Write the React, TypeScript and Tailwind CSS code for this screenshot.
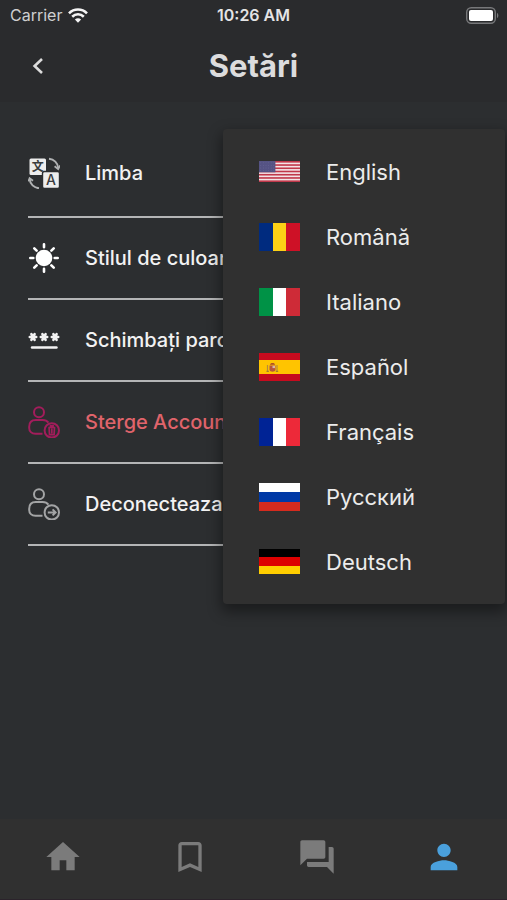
import type { ReactNode } from "react";
import { MdBookmarkBorder, MdHome, MdPerson, MdQuestionAnswer } from "react-icons/md";

/* ── Settings icons ───────────────────────────── */

function TranslateIcon() {
  return (
    <svg viewBox="0 0 32 32" className="size-8" fill="none">
      <path d="M21 1.800c5 .4 8.800 4 9.200 9.200" stroke="#b0b2b3" strokeWidth="2" />
      <path d="M26.600 9.300l3.600 2.800 2-3.800" stroke="#b0b2b3" strokeWidth="1.800" />
      <path d="M11 31.200c-5-.4-9-4-9.300-9.200" stroke="#b0b2b3" strokeWidth="2" />
      <path d="M5 23.700l-3.400-2.600-1.200 3.400" stroke="#b0b2b3" strokeWidth="1.800" />
      <rect x="1.500" y="1.500" width="16.500" height="16.500" rx="1.500" fill="#ededed" />
      <text x="9.700" y="14.300" textAnchor="middle" fontSize="12" fontWeight="700" fontFamily="'Noto Sans CJK SC', sans-serif" fill="#3a3c3e">
        文
      </text>
      <rect x="14.500" y="14.500" width="17" height="17" rx="2" fill="#ededed" stroke="#2c2e30" strokeWidth="1.400" />
      <text x="23" y="28" textAnchor="middle" fontSize="14" fontWeight="500" fontFamily="Inter, sans-serif" fill="#3a3c3e">
        A
      </text>
    </svg>
  );
}

function SunIcon() {
  return (
    <svg viewBox="0 0 32 32" className="size-8">
      <circle cx="16" cy="16" r="8.300" fill="#fff" />
      <path
        d="M16 2.300v3M16 26.700v3M2.300 16h3M26.700 16h3M6.300 6.300l2.300 2.300M23.400 23.400l2.300 2.300M6.300 25.700l2.300-2.300M23.400 8.600l2.300-2.300"
        stroke="#fff"
        strokeWidth="2.600"
        strokeLinecap="round"
      />
    </svg>
  );
}

function PasswordIcon() {
  return (
    <svg viewBox="0 0 32 32" className="size-8" stroke="#f2f2f2" strokeLinecap="round">
      {[5, 16, 27].map((x) => (
        <path
          key={x}
          d={`M${x - 3.2} 13h6.400M${x - 1.6} 10.200l3.200 5.600M${x + 1.6} 10.200l-3.200 5.600`}
          strokeWidth="2.600"
        />
      ))}
      <path d="M4 23.500h24.500" strokeWidth="2.400" />
    </svg>
  );
}

function AccountIcon({ children }: { children: ReactNode }) {
  return (
    <svg viewBox="0 0 32 32" className="size-8" fill="none" stroke="currentColor" strokeWidth="2">
      <circle cx="11" cy="6.300" r="5" />
      <path d="M14.500 27.700H7.500C3.500 27.700 1.200 25.300 1.200 22v-1.300c0-4.200 2.500-6.700 6.500-6.700h7c2.500 0 4.500 1 5.700 2.600" />
      <circle cx="23.800" cy="24.400" r="7.200" />
      {children}
    </svg>
  );
}

const settings = [
  { label: "Limba", icon: <TranslateIcon />, color: "text-[#f2f2f2]" },
  { label: "Stilul de culoare", icon: <SunIcon />, color: "text-[#f2f2f2]" },
  { label: "Schimbați parola", icon: <PasswordIcon />, color: "text-[#f2f2f2]" },
  {
    label: "Sterge Account",
    icon: (
      <span className="text-[#a21d5b]">
        <AccountIcon>
          <path d="M20.300 21.500h7M22.500 21.300v-1.500h2.600v1.500M21.100 21.500l.4 7.200h4.600l.4-7.200M23.800 22.500v5" strokeWidth="1.700" />
        </AccountIcon>
      </span>
    ),
    color: "text-[#e0646b]",
  },
  {
    label: "Deconecteaza",
    icon: (
      <span className="text-[#a3a4a5]">
        <AccountIcon>
          <path d="M19.800 24.400h7.500M24.600 21.400l3 3-3 3" />
        </AccountIcon>
      </span>
    ),
    color: "text-[#f2f2f2]",
  },
];

/* ── Flags ────────────────────────────────────── */

function Flag({ colors, vertical = false, size = "h-7" }: { colors: string[]; vertical?: boolean; size?: string }) {
  return (
    <svg viewBox="0 0 3 3" preserveAspectRatio="none" shapeRendering="crispEdges" className={`w-[41px] ${size}`}>
      {colors.map((c, i) =>
        vertical ? (
          <rect key={i} x={i} y="0" width="1" height="3" fill={c} />
        ) : (
          <rect key={i} x="0" y={i} width="3" height="1" fill={c} />
        )
      )}
    </svg>
  );
}

function UsaFlag() {
  return (
    <svg viewBox="0 0 41 21" className="h-[21px] w-[41px]">
      <rect width="41" height="21" fill="#f3e4e6" />
      {Array.from({ length: 7 }).map((_, i) => (
        <rect key={i} y={(i * 42) / 13} width="41" height={21 / 13} fill="#c0384a" />
      ))}
      <rect width="16.400" height="11.300" fill="#555384" />
      {Array.from({ length: 4 }).map((_, row) =>
        Array.from({ length: 6 }).map((_, col) => (
          <circle key={`${row}-${col}`} cx={1.8 + col * 2.6} cy={1.8 + row * 2.6} r=".4" fill="#74729c" />
        ))
      )}
    </svg>
  );
}

function SpainFlag() {
  return (
    <svg viewBox="0 0 41 28" className="h-7 w-[41px]">
      <rect width="41" height="28" fill="#c60b1e" />
      <rect y="7" width="41" height="14" fill="#ffc400" />
      <path d="M8.500 12v6M18 12v6" stroke="#b58a3c" strokeWidth="1.200" />
      <path d="M10.500 12.500h6v4c0 3-6 3-6 0z" fill="#b5553c" />
      <path d="M11 11.800c0-2.500 5-2.500 5 0z" fill="#ad4a28" />
      <rect x="13.500" y="12.800" width="2.500" height="2.300" fill="#d9b8a8" />
      <path d="M7.500 18.300h2.400M16.800 18.300h2.400" stroke="#8a6a3a" strokeWidth="1" />
    </svg>
  );
}

const languages = [
  { name: "English", flag: <UsaFlag /> },
  { name: "Română", flag: <Flag vertical colors={["#002b7f", "#fcd116", "#ce1126"]} /> },
  { name: "Italiano", flag: <Flag vertical colors={["#009246", "#ffffff", "#ce2b37"]} /> },
  { name: "Español", flag: <SpainFlag /> },
  { name: "Français", flag: <Flag vertical colors={["#002395", "#ffffff", "#ed2939"]} /> },
  { name: "Русский", flag: <Flag colors={["#ffffff", "#0039a6", "#d52b1e"]} /> },
  { name: "Deutsch", flag: <Flag size="h-[25px]" colors={["#000000", "#dd0000", "#ffce00"]} /> },
];

const tabs = [
  { label: "Acasă", Icon: MdHome, color: "text-[#7b7b7b]" },
  { label: "Salvate", Icon: MdBookmarkBorder, color: "text-[#7b7b7b]" },
  { label: "Mesaje", Icon: MdQuestionAnswer, color: "text-[#7b7b7b]" },
  { label: "Profil", Icon: MdPerson, color: "text-[#4aa0dc]" },
];

function StatusBar() {
  return (
    <div className="grid h-[30px] grid-cols-3 items-center px-2 text-base">
      <div className="flex items-center gap-1.5 pl-0.5 text-[#cfcfd0]">
        <span>Carrier</span>
        <svg viewBox="0 0 20 15" className="h-[15px] w-5" fill="none" stroke="#f5f5f5" strokeWidth="2.600">
          <path d="M1 5.300c5-5 13-5 18 0" />
          <path d="M4.200 8.700c3.300-3.200 8.300-3.200 11.600 0" />
          <path d="M6.900 11.500c1.800-1.700 4.400-1.700 6.200 0L10 14.800z" fill="#f5f5f5" stroke="none" />
        </svg>
      </div>
      <span className="text-center font-semibold text-[#e4e4e5]">10:26 AM</span>
      <svg viewBox="0 0 33 17" className="h-[17px] w-[33px] justify-self-end">
        <rect x=".7" y=".7" width="28.600" height="15.600" rx="4.500" fill="none" stroke="#77787a" strokeWidth="1.400" />
        <rect x="3" y="3" width="24" height="11" rx="2" fill="#fff" />
        <path d="M31 6v5c1.800-.6 1.800-4.400 0-5z" fill="#77787a" />
      </svg>
    </div>
  );
}

export default function App() {
  return (
    <div className="flex min-h-screen flex-col bg-[#2c2e30] font-[Inter,'Noto_Sans',sans-serif]">
      <header className="bg-[#2a2b2d]">
        <StatusBar />
        <div className="grid h-[72px] grid-cols-[80px_1fr_80px] items-center">
          <button aria-label="Înapoi" className="flex h-12 items-center pl-8">
            <svg viewBox="0 0 12 16" className="h-4 w-3" fill="none" stroke="#dcdcdc" strokeWidth="2.600">
              <path d="M10 1L2.600 8l7.400 7" />
            </svg>
          </button>
          <h1 className="text-center text-[31px] leading-9 font-bold text-[#dcdcdd]">Setări</h1>
        </div>
      </header>

      <main className="relative flex-1 overflow-hidden px-7 pt-[31px]">
        <ul>
          {settings.map((item) => (
            <li key={item.label} className="border-b-2 border-[#b4b5b6] first:pb-[3px]">
              <button className={`flex h-20 w-full items-center gap-[25px] text-left text-xl font-medium ${item.color}`}>
                {item.icon}
                {item.label}
              </button>
            </li>
          ))}
        </ul>

        {/* ── Language popup ───────────────────────── */}
        <div
          role="menu"
          className="absolute top-[27px] right-0.5 w-[282px] rounded-sm bg-[#303030] py-2.5 shadow-[0_6px_14px_2px_rgba(0,0,0,0.4)]"
        >
          {languages.map((lang) => (
            <button
              key={lang.name}
              role="menuitem"
              className="flex h-[65px] w-full items-center gap-[26px] pl-9 text-[22px] leading-7 text-[#ececec]"
            >
              {lang.flag}
              {lang.name}
            </button>
          ))}
        </div>
      </main>

      <nav className="grid h-[81px] grid-cols-4 border-b border-[#2b232b] bg-[#303030] pb-1">
        {tabs.map(({ label, Icon, color }) => (
          <button key={label} aria-label={label} className={`flex items-center justify-center ${color}`}>
            <Icon className="size-10" />
          </button>
        ))}
      </nav>
    </div>
  );
}
